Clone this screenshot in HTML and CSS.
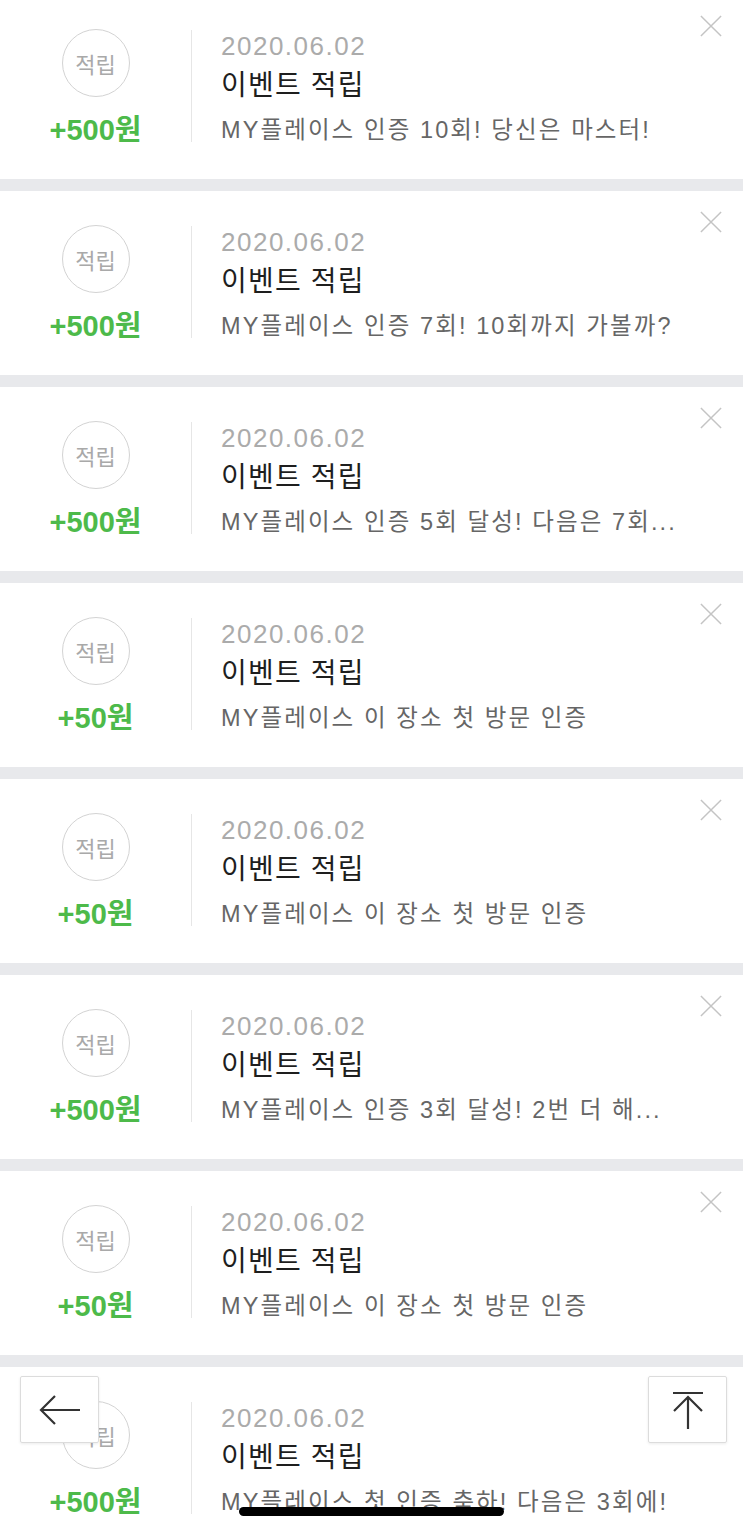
FILE: index.html
```html
<!DOCTYPE html>
<html lang="ko">
<head>
    <meta charset="UTF-8">
    <meta name="viewport" content="width=device-width, initial-scale=1.0">
    <title>적립 내역</title>
    <link rel="stylesheet" href="styles.css">
</head>
<body>
    <div class="list" id="pointList">
        <!-- rows are rendered below -->
    </div>

    <button class="float-btn back-btn" aria-label="뒤로">
        <svg width="44" height="36" viewBox="0 0 44 36"><path d="M42 18H3M17 4L3 18l14 14" fill="none" stroke="#333" stroke-width="2.2"/></svg>
    </button>
    <button class="float-btn top-btn" aria-label="맨 위로">
        <svg width="36" height="40" viewBox="0 0 36 40"><path d="M3 3h30M18 7v32M4 21L18 7l14 14" fill="none" stroke="#333" stroke-width="2.2"/></svg>
    </button>
    <div class="home-bar"></div>

    <script>
        const items = [
            { amount: 500, desc: 'MY플레이스 인증 10회! 당신은 마스터!' },
            { amount: 500, desc: 'MY플레이스 인증 7회! 10회까지 가볼까?' },
            { amount: 500, desc: 'MY플레이스 인증 5회 달성! 다음은 7회...' },
            { amount: 50, desc: 'MY플레이스 이 장소 첫 방문 인증' },
            { amount: 50, desc: 'MY플레이스 이 장소 첫 방문 인증' },
            { amount: 500, desc: 'MY플레이스 인증 3회 달성! 2번 더 해...' },
            { amount: 50, desc: 'MY플레이스 이 장소 첫 방문 인증' },
            { amount: 500, desc: 'MY플레이스 첫 인증 축하! 다음은 3회에!' }
        ];

        const list = document.getElementById('pointList');
        items.forEach((item) => {
            const row = document.createElement('div');
            row.className = 'item';
            row.innerHTML = `
                <div class="item-left">
                    <div class="badge">적립</div>
                    <div class="amount">+${item.amount}원</div>
                </div>
                <div class="divider"></div>
                <div class="item-body">
                    <div class="date">2020.06.02</div>
                    <div class="title">이벤트 적립</div>
                    <div class="desc">${item.desc}</div>
                </div>
                <button class="close" aria-label="삭제">
                    <svg width="24" height="24" viewBox="0 0 24 24"><path d="M1 1l22 22M23 1L1 23" stroke="#c4c4c4" stroke-width="1.6"/></svg>
                </button>
            `;
            list.appendChild(row);
        });
    </script>
</body>
</html>
```

FILE: styles.css
```css
body {
    margin: 0;
    background-color: #e8e9ec;
    font-family: "Liberation Sans", "Noto Sans CJK KR", sans-serif;
    height: 1532px;
    overflow: hidden;
}
.list {
    display: flex;
    flex-direction: column;
    gap: 12px;
    margin-top: -5px;
}
.item {
    display: flex;
    align-items: flex-start;
    height: 184px;
    padding-top: 35px;
    box-sizing: border-box;
    background-color: #fff;
}
.item-left {
    width: 191px;
    display: flex;
    flex-direction: column;
    align-items: center;
}
.badge {
    width: 66px;
    height: 66px;
    margin-top: -1px;
    border: 1.5px solid #d3d3d3;
    border-radius: 50%;
    display: flex;
    align-items: center;
    justify-content: center;
    color: #a9a9a9;
    font-size: 22px;
}
.amount {
    margin-top: 13px;
    line-height: 40px;
    font-size: 29px;
    font-weight: bold;
    color: #4dba4a;
    letter-spacing: 0;
}
.divider {
    width: 1px;
    height: 112px;
    background-color: #e6e6e6;
}
.item-body {
    flex: 1;
    min-width: 0;
    padding-left: 29px;
}
.date {
    line-height: 32px;
    font-size: 26px;
    color: #ababab;
    letter-spacing: 1.5px;
}
.title {
    line-height: 48px;
    font-size: 28px;
    color: #1e1e1e;
    letter-spacing: 1.2px;
}
.desc {
    line-height: 40px;
    font-size: 23.5px;
    color: #666;
    letter-spacing: 2.1px;
    white-space: nowrap;
}
.close {
    margin: -15px 21px 0 0;
    padding: 0;
    border: none;
    background: none;
    width: 22px;
    height: 22px;
}
.close svg {
    width: 22px;
    height: 22px;
    display: block;
}
.float-btn {
    position: fixed;
    top: 1376px;
    width: 79px;
    height: 67px;
    padding: 0;
    background-color: #fff;
    border: 1px solid #dcdcdc;
    border-radius: 2px;
    box-shadow: 0 1px 3px rgba(0, 0, 0, 0.08);
    display: flex;
    align-items: center;
    justify-content: center;
}
.back-btn {
    left: 20px;
}
.top-btn {
    left: 648px;
}
.home-bar {
    position: fixed;
    left: 239px;
    top: 1507px;
    width: 265px;
    height: 9px;
    border-radius: 5px;
    background-color: #000;
}
```
